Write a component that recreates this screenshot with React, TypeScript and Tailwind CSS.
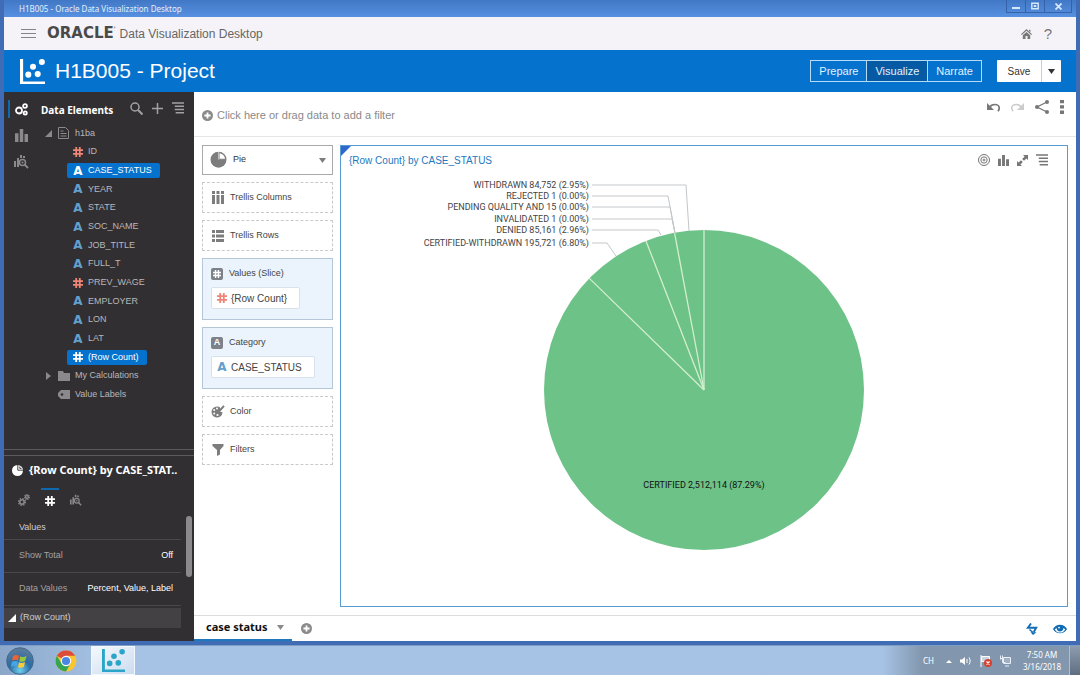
import { useState } from 'react';
import type { ReactNode } from 'react';

type FieldKind = 'number' | 'text';
type Field = { name: string; kind: FieldKind };

const FIELDS: Field[] = [
  { name: 'ID', kind: 'number' },
  { name: 'CASE_STATUS', kind: 'text' },
  { name: 'YEAR', kind: 'text' },
  { name: 'STATE', kind: 'text' },
  { name: 'SOC_NAME', kind: 'text' },
  { name: 'JOB_TITLE', kind: 'text' },
  { name: 'FULL_T', kind: 'text' },
  { name: 'PREV_WAGE', kind: 'number' },
  { name: 'EMPLOYER', kind: 'text' },
  { name: 'LON', kind: 'text' },
  { name: 'LAT', kind: 'text' },
  { name: '(Row Count)', kind: 'number' },
];

// Pie geometry, in viewBox units. Callout points run from the label to the slice.
const CX = 363;
const CY = 216;
const R = 160;
const BOUNDARIES = [0, 2.95, 5.91, 12.71];
const CALLOUTS = [
  { label: 'WITHDRAWN 84,752 (2.95%)', y: 11, line: '345,11 348,57' },
  { label: 'REJECTED 1 (0.00%)', y: 22, line: '327,22 334,59' },
  { label: 'PENDING QUALITY AND 15 (0.00%)', y: 33, line: '329,33 334,59' },
  { label: 'INVALIDATED 1 (0.00%)', y: 45, line: '331,45 334,59' },
  { label: 'DENIED 85,161 (2.96%)', y: 56, line: '317,56 320,61' },
  { label: 'CERTIFIED-WITHDRAWN 195,721 (6.80%)', y: 69, line: '266,69 275,82' },
];

// --- Icons ------------------------------------------------------------------
function Hash({ className = '', size = 10 }: { className?: string; size?: number }) {
  return (
    <svg width={size} height={size} viewBox="0 0 10 10" className={className} fill="none"
         stroke="currentColor" strokeWidth="1.8" aria-hidden="true">
      <path d="M3.2 0v10M6.8 0v10M0 3.2h10M0 6.8h10" />
    </svg>
  );
}

function KindIcon({ kind, selected }: { kind: FieldKind; selected?: boolean }) {
  if (kind === 'number') return <Hash className={selected ? 'text-white' : 'text-[#ee8577]'} />;
  return (
    <span aria-hidden="true"
          className={"w-[10px] text-center font-['DejaVu_Sans',sans-serif] text-[12px] leading-none font-bold " +
            (selected ? 'text-white' : 'text-[#63a0cc]')}>
      A
    </span>
  );
}

function Scatter({ size, className }: { size: number; className: string }) {
  return (
    <svg width={size} height={size} viewBox="0 0 24 24" className={className} fill="currentColor" aria-hidden="true">
      <path d="M0 0h3v21.5h21V24H0z" />
      <circle cx="8" cy="15" r="2.9" />
      <circle cx="12.5" cy="7.5" r="2.9" />
      <circle cx="17" cy="14.5" r="2.9" />
      <circle cx="21" cy="2.9" r="2.9" />
    </svg>
  );
}

function Bars({ size = 13 }: { size?: number }) {
  return (
    <svg width={size} height={size} viewBox="0 0 12 12" fill="currentColor" aria-hidden="true">
      <path d="M0 4h3.2v8H0zM4.4 0h3.2v12H4.4zM8.8 4.500h3.2V12H8.8z" />
    </svg>
  );
}

function BarsSearch({ size = 15 }: { size?: number }) {
  return (
    <svg width={size} height={size} viewBox="0 0 15 15" fill="currentColor" aria-hidden="true">
      <path d="M0 7h2v6H0zM3 4h2v9H3zM6 1h2v3H6zM9 2h2v2H9z" />
      <circle cx="8.5" cy="8.5" r="3" fill="none" stroke="currentColor" strokeWidth="1.5" />
      <circle cx="8.5" cy="8.5" r="1" />
      <path d="M10.5 10.5l3.5 3.5" stroke="currentColor" strokeWidth="1.8" />
    </svg>
  );
}

function Menu({ size = 13 }: { size?: number }) {
  return (
    <svg width={size} height={size} viewBox="0 0 13 13" stroke="currentColor" strokeWidth="1.6" aria-hidden="true">
      <path d="M0 1.2h13M3 4.7h10M3 8.2h10M4 11.7h9" />
    </svg>
  );
}

function CirclePlus() {
  return (
    <svg width="11" height="11" viewBox="0 0 11 11" aria-hidden="true">
      <circle cx="5.5" cy="5.5" r="5.5" fill="#8a8a8a" />
      <path d="M5.5 2.4v6.2M2.4 5.5h6.2" stroke="#fff" strokeWidth="1.8" />
    </svg>
  );
}

function PieIcon({ size, className }: { size: number; className: string }) {
  return (
    <svg width={size} height={size} viewBox="0 0 16 16" className={className} aria-hidden="true">
      <circle cx="8" cy="8.200" r="7.500" fill="currentColor" />
      <path d="M8.500 7.700V1.500a6.200 6.200 0 0 1 6.200 6.200z" fill="#fff" stroke="currentColor" strokeWidth="1" />
      <path d="M8.200 8V.5" stroke="#fff" strokeWidth=".6" />
    </svg>
  );
}

function DataCircles() {
  return (
    <svg width="13" height="13" viewBox="0 0 13 13" fill="none" stroke="currentColor" strokeWidth="1.8" aria-hidden="true">
      <circle cx="4" cy="7.5" r="3" />
      <circle cx="10" cy="3" r="1.9" />
      <circle cx="10.2" cy="10" r="1.6" />
    </svg>
  );
}

function Gears() {
  return (
    <svg width="12" height="12" viewBox="0 0 12 12" fill="none" stroke="currentColor" aria-hidden="true">
      <circle cx="4" cy="8" r="2.200" strokeWidth="1.600" />
      <circle cx="4" cy="8" r="3.500" strokeWidth="1.200" strokeDasharray="1.400 1.350" />
      <circle cx="9" cy="3" r="1.400" strokeWidth="1.300" />
      <circle cx="9" cy="3" r="2.400" strokeWidth="1.100" strokeDasharray="1.200 .700" />
    </svg>
  );
}

function Caret({ className }: { className: string }) {
  return (
    <svg width="7" height="5" viewBox="0 0 7 5" className={className} aria-hidden="true">
      <path d="M0 0h7L3.5 5z" fill="currentColor" />
    </svg>
  );
}

function IconButton({ label, className = '', children }: { label: string; className?: string; children: ReactNode }) {
  return (
    <button type="button" aria-label={label} className={'flex items-center justify-center ' + className}>
      {children}
    </button>
  );
}

// --- Window chrome ----------------------------------------------------------
function TitleBar() {
  return (
    <div className="flex h-[17px] shrink-0 items-center justify-between bg-linear-to-b from-[#4178c6] to-[#5790e0]
                    pl-[15px] pr-1 font-['Noto_Sans',sans-serif] text-[8px] text-[#e4effb]">
      <span>H1B005 - Oracle Data Visualization Desktop</span>
      <div className="flex h-[13px] self-start border-x border-b border-[#3562a8]">
        <IconButton label="Minimize" className="w-[19px] border-r border-[#3562a8]">
          <svg width="8" height="8" viewBox="0 0 8 8"><path d="M0 5h8v2H0z" fill="#d6e8fb" /></svg>
        </IconButton>
        <IconButton label="Maximize" className="w-[19px] border-r border-[#3562a8]">
          <svg width="8" height="8" viewBox="0 0 8 8" fill="none" stroke="#d6e8fb">
            <path d="M.8 1.2h6.4v5.6H.8z" strokeWidth="1.4" /><path d="M3 3.5h2v1H3z" />
          </svg>
        </IconButton>
        <IconButton label="Close" className="w-[26px]">
          <svg width="7" height="7" viewBox="0 0 7 7" stroke="#d6e8fb" strokeWidth="1.7">
            <path d="M.5.5l6 6M6.5.5l-6 6" />
          </svg>
        </IconButton>
      </div>
    </div>
  );
}

function AppHeader() {
  return (
    <header className="flex h-[33px] shrink-0 items-center bg-[#f5f3f7] pl-[17px] pr-6 text-[#666]">
      <IconButton label="Menu">
        <svg width="15" height="11" viewBox="0 0 15 11" stroke="#858585" strokeWidth="1.2">
          <path d="M0 1.5h15M0 5.5h15M0 9.5h15" />
        </svg>
      </IconButton>
      <span className="ml-[11px] font-['DejaVu_Sans',sans-serif] text-[15px] leading-none font-bold text-[#4a4a4a]">
        ORACLE<span className="align-top text-[6px]">'</span>
      </span>
      <span className="ml-1 text-[12px]">Data Visualization Desktop</span>
      <div className="ml-auto flex items-center gap-3 text-[#777]">
        <IconButton label="Home">
          <svg width="11" height="10" viewBox="0 0 11 10" fill="currentColor">
            <path d="M5.5 0L11 5.2l-.8.8L5.5 1.8.8 6 0 5.2z" /><path d="M8 .8h1.4v2.5L8 2z" />
            <path d="M1.8 6.2L5.5 3l3.7 3.2V10H6.5V7h-2v3H1.8z" />
          </svg>
        </IconButton>
        <IconButton label="Help" className="text-[15px] leading-none">?</IconButton>
      </div>
    </header>
  );
}

const MODES = ['Prepare', 'Visualize', 'Narrate'];

function ProjectBar() {
  const [mode, setMode] = useState('Visualize');
  return (
    <div className="flex h-[42px] shrink-0 items-center bg-[#0572ce] pl-4 pr-[15px] text-white">
      <Scatter size={25} className="text-white" />
      <h1 className="ml-[10px] text-[21px]">H1B005 - Project</h1>
      <div className="ml-auto flex h-[22px] divide-x divide-[#b5dcf7] border border-[#b5dcf7] text-[11px]">
        {MODES.map(m => (
          <button key={m} type="button" onClick={() => setMode(m)}
                  className={'px-2 text-[#e2f1fc] ' + (m === mode ? 'bg-[#0659a3]' : '')}>
            {m}
          </button>
        ))}
      </div>
      <div className="ml-[15px] flex h-[22px] divide-x divide-[#ccc] rounded-[1px] bg-white text-[10px] text-[#333]">
        <button type="button" className="w-[45px]">Save</button>
        <IconButton label="Save options" className="w-[19px]"><Caret className="text-[#333]" /></IconButton>
      </div>
    </div>
  );
}

// --- Sidebar ----------------------------------------------------------------
function FieldTree() {
  return (
    <ul className="grid h-[280px] auto-rows-fr text-[9px] text-[#b9b7b9]">
      <li className="flex items-center pl-[7px]">
        <svg width="7" height="7" viewBox="0 0 7 7"><path d="M7 0v7H0z" fill="#8b898b" /></svg>
        <svg width="11" height="12" viewBox="0 0 11 12" fill="none" stroke="#8b898b" className="mx-[6px]">
          <path d="M.5.5h7l3 3v8H.5z M2.5 4h3M2.5 6.5h6M2.5 9h6" />
        </svg>
        h1ba
      </li>
      {FIELDS.map(f => {
        const selected = f.name === 'CASE_STATUS' || f.name === '(Row Count)';
        return (
          <li key={f.name} className="flex items-center pl-[29px]">
            <button type="button"
                    className={'flex h-[15px] items-center gap-[5px] rounded-xs pl-[6px] pr-2 ' +
                      (selected ? 'bg-[#0572ce] text-white' : '')}>
              <KindIcon kind={f.kind} selected={selected} />
              {f.name}
            </button>
          </li>
        );
      })}
      <li className="flex items-center pl-2">
        <svg width="5" height="8" viewBox="0 0 5 8"><path d="M0 0l5 4-5 4z" fill="#8b898b" /></svg>
        <svg width="12" height="10" viewBox="0 0 12 10" className="mr-[5px] ml-[7px]">
          <path d="M0 0h5l1 2h6v8H0z" fill="#8b898b" />
        </svg>
        My Calculations
      </li>
      <li className="flex items-center pl-5">
        <svg width="12" height="9" viewBox="0 0 12 9" className="mr-[5px]">
          <path d="M3 0h9v9H3L0 6V3z" fill="#8b898b" /><circle cx="4" cy="4.5" r="1.3" fill="#322f32" />
        </svg>
        Value Labels
      </li>
    </ul>
  );
}

function PropertiesPane() {
  return (
    <section className="border-t border-[#5c5a5c] pt-[5px]">
      <div className="flex h-[186px] flex-col border-t border-[#5c5a5c] text-[9px] text-[#cfcdcf]">
        <div className="flex h-7 shrink-0 items-center gap-[6px] pl-2">
          <svg width="11" height="11" viewBox="0 0 11 11" aria-hidden="true">
            <circle cx="5.500" cy="5.500" r="5.500" fill="#fff" />
            <path d="M5.800 0v5.200H11M7.800 1.500v1.900h1.800" fill="none" stroke="#322f32" strokeWidth=".9" />
          </svg>
          <h2 className="font-['Noto_Sans',sans-serif] text-[11px] font-bold whitespace-nowrap text-white">
            {'{Row Count} by CASE_STAT..'}
          </h2>
        </div>
        <div className="mt-1 flex h-6 shrink-0 gap-2 pl-[11px] text-[#8b898b]">
          <IconButton label="General" className="w-[18px]"><Gears /></IconButton>
          <IconButton label="Values" className="w-[18px] border-t-2 border-[#0f69ad] text-white"><Hash /></IconButton>
          <IconButton label="Analytics" className="w-[18px]"><BarsSearch size={12} /></IconButton>
        </div>
        <div className="mt-1 flex flex-1 items-start justify-between pr-[2px]">
          <div className="w-[177px]">
            <h3 className="flex h-6 items-center border-b border-[#4a484a] pl-[15px]">Values</h3>
            <dl>
              <div className="flex h-[33px] items-center justify-between border-b border-[#4a484a] pr-2 pl-[15px]">
                <dt className="text-[#a3a1a3]">Show Total</dt>
                <dd className="text-white">Off</dd>
              </div>
              <div className="flex h-[33px] items-center justify-between border-b border-[#4a484a] pr-2 pl-[15px]">
                <dt className="text-[#a3a1a3]">Data Values</dt>
                <dd className="text-white">Percent, Value, Label</dd>
              </div>
            </dl>
            <button type="button" className="mt-[2px] flex h-5 w-full items-center gap-1 bg-[#434143] pl-1">
              <svg width="8" height="8" viewBox="0 0 8 8"><path d="M8 0v8H0z" fill="#fff" /></svg>
              (Row Count)
            </button>
          </div>
          <div className="h-[61px] w-[6px] rounded-sm bg-[#8b898b]" />
        </div>
      </div>
    </section>
  );
}

function Sidebar() {
  return (
    <aside className="flex w-[190px] shrink-0 flex-col bg-[#322f32]">
      <div className="flex flex-1">
        <nav className="w-[34px] pt-1 pl-1 text-[#8b898b]">
          <IconButton label="Data elements" className="my-1 h-[18px] w-full border-l-2 border-[#0f69ad] pr-[6px] text-white">
            <DataCircles />
          </IconButton>
          <IconButton label="Visualizations" className="h-[26px] w-full pr-1"><Bars /></IconButton>
          <IconButton label="Analytics" className="h-[26px] w-full pr-1"><BarsSearch /></IconButton>
        </nav>
        <div className="flex-1">
          <div className="flex h-8 items-center pt-1 pr-[10px] pl-[3px] text-[#a3a1a3]">
            <h2 className="font-['Noto_Sans',sans-serif] text-[10px] font-bold text-white">Data Elements</h2>
            <div className="ml-auto flex items-center gap-[9px] pb-1">
              <IconButton label="Search">
                <svg width="13" height="13" viewBox="0 0 13 13" fill="none" stroke="currentColor" strokeWidth="1.5">
                  <circle cx="5" cy="5" r="4" /><path d="M8 8l4.5 4.5" strokeWidth="2" />
                </svg>
              </IconButton>
              <IconButton label="Add">
                <svg width="11" height="11" viewBox="0 0 11 11" stroke="currentColor" strokeWidth="1.5">
                  <path d="M5.5 0v11M0 5.5h11" />
                </svg>
              </IconButton>
              <IconButton label="Options"><Menu size={12} /></IconButton>
            </div>
          </div>
          <FieldTree />
        </div>
      </div>
      <PropertiesPane />
    </aside>
  );
}

// --- Canvas -----------------------------------------------------------------
function FilterBar() {
  return (
    <div className="flex h-[45px] shrink-0 items-center border-b border-[#e6e6e6] pr-3 pl-2 text-[#777]">
      <button type="button" className="flex items-center gap-1 pt-[2px] text-[11px] text-[#8a8a8a]">
        <CirclePlus />
        Click here or drag data to add a filter
      </button>
      <div className="ml-auto flex items-center gap-[11px] pb-[14px]">
        <IconButton label="Undo">
          <svg width="13" height="10" viewBox="0 0 13 10">
            <path d="M0 1v7h7z" fill="currentColor" />
            <path d="M2.500 5.500c2-4 9-4 9.700 0 .2 1.500-.3 2.500-1.200 3.800" fill="none" stroke="currentColor" strokeWidth="1.700" />
          </svg>
        </IconButton>
        <IconButton label="Redo" className="text-[#ccc]">
          <svg width="13" height="10" viewBox="0 0 13 10">
            <path d="M13 1v7H6z" fill="currentColor" />
            <path d="M10.500 5.500c-2-4-9-4-9.700 0-.2 1.500.3 2.500 1.200 3.800" fill="none" stroke="currentColor" strokeWidth="1.500" />
          </svg>
        </IconButton>
        <IconButton label="Share">
          <svg width="14" height="14" viewBox="0 0 14 14" fill="currentColor">
            <path d="M12 2L2 7l10 5" fill="none" stroke="currentColor" strokeWidth="1.3" />
            <circle cx="12" cy="2" r="2" /><circle cx="2" cy="7" r="2" /><circle cx="12" cy="12" r="2" />
          </svg>
        </IconButton>
        <IconButton label="More">
          <svg width="4" height="14" viewBox="0 0 4 14" fill="currentColor">
            <path d="M0 0h4v3.300H0zM0 5.300h4v3.300H0zM0 10.600h4v3.300H0z" />
          </svg>
        </IconButton>
      </div>
    </div>
  );
}

function DropZone({ label, icon }: { label: string; icon: ReactNode }) {
  return (
    <div className="flex h-[31px] items-center gap-[5px] border border-dashed border-[#c9c9c9] pl-2 text-[#7d7d7d]">
      {icon}
      <span className="text-[#444]">{label}</span>
    </div>
  );
}

function FilledZone({ label, icon, chip, kind }: { label: string; icon: ReactNode; chip: string; kind: FieldKind }) {
  return (
    <div className="flex h-[62px] flex-col items-start gap-[7px] border border-[#b4c6d8] bg-[#ebf3fc] px-2 pt-2">
      <div className="flex h-[13px] items-center gap-[6px] text-[#444]">
        {icon}
        {label}
      </div>
      <button type="button"
              className="flex h-[22px] items-center gap-1 rounded-xs border border-[#d8e2ec] bg-white
                         pr-3 pl-[5px] text-[10px] text-[#444]">
        <KindIcon kind={kind} />
        {chip}
      </button>
    </div>
  );
}

function GrammarPanel() {
  return (
    <div className="flex w-[131px] shrink-0 flex-col gap-[7px] text-[9px]">
      <div className="relative h-[30px] text-[#7d7d7d]">
        <select aria-label="Visualization type" defaultValue="Pie"
                className="h-full w-full appearance-none border border-[#aaa] bg-white pl-[30px] text-[#333]">
          <option>Pie</option>
        </select>
        <PieIcon size={17} className="pointer-events-none absolute top-[6px] left-2" />
        <Caret className="pointer-events-none absolute top-[13px] right-[7px]" />
      </div>
      <DropZone label="Trellis Columns" icon={
        <svg width="14" height="13" viewBox="0 0 14 13" fill="currentColor">
          <path d="M1 0h3v3H1zM5.500 0h3v3h-3zM10 0h3v3h-3zM1 4h3v9H1zM5.500 4h3v9h-3zM10 4h3v9h-3z" />
        </svg>
      } />
      <DropZone label="Trellis Rows" icon={
        <svg width="14" height="12" viewBox="0 0 14 12" fill="currentColor">
          <path d="M1 0h3v3H1zM5 0h8v3H5zM1 4.500h3v3H1zM5 4.500h8v3H5zM1 9h3v3H1zM5 9h8v3H5z" />
        </svg>
      } />
      <FilledZone label="Values (Slice)" chip="{Row Count}" kind="number" icon={
        <span className="flex size-3 items-center justify-center rounded-xs bg-[#7d828a] text-white">
          <Hash size={8} />
        </span>
      } />
      <FilledZone label="Category" chip="CASE_STATUS" kind="text" icon={
        <span aria-hidden="true"
              className="flex size-3 items-center justify-center rounded-xs bg-[#7d828a] font-bold text-white">
          A
        </span>
      } />
      <DropZone label="Color" icon={
        <svg width="14" height="13" viewBox="0 0 14 13">
          <path d="M6 1.500a5.500 5.500 0 1 0 5.500 6c0-1-2 0-2.500-1s1-2.500 0-4C8.300 1.800 7 1.500 6 1.500z" fill="currentColor" />
          <path d="M13 .8L7.500 7" stroke="currentColor" strokeWidth="2" />
          <g fill="#fff"><circle cx="3.200" cy="5" r="1" /><circle cx="6" cy="3.500" r="1" />
            <circle cx="3.200" cy="8.500" r="1" /><circle cx="6.500" cy="10" r="1.100" /></g>
        </svg>
      } />
      <DropZone label="Filters" icon={
        <svg width="14" height="12" viewBox="0 0 14 12"><path d="M1.500 0h11v2L9 6v4.500L6 12V6L1.500 2z" fill="currentColor" /></svg>
      } />
    </div>
  );
}

function PieChart() {
  return (
    <svg viewBox="0 0 726 432" className="min-h-0 w-full flex-1" role="img" aria-label="Row count by case status">
      <circle cx={CX} cy={CY} r={R} fill="#6dc287" />
      <g stroke="#d3efcf" strokeWidth="1.300">
        {BOUNDARIES.map(pct => {
          const a = (pct / 100) * 2 * Math.PI;
          return <line key={pct} x1={CX} y1={CY} x2={CX - R * Math.sin(a)} y2={CY - R * Math.cos(a)} />;
        })}
      </g>
      <g className="font-[Roboto,sans-serif] text-[9px]" fill="#444">
        {CALLOUTS.map(c => (
          <g key={c.label}>
            <polyline points={`251,${c.y} ${c.line}`} fill="none" stroke="#c3c7ca" />
            <text x="248" y={c.y + 3} textAnchor="end">{c.label}</text>
          </g>
        ))}
        <text x={CX} y="314" textAnchor="middle" fill="#111">CERTIFIED 2,512,114 (87.29%)</text>
      </g>
    </svg>
  );
}

function ChartPanel() {
  return (
    <section className="relative flex flex-1 flex-col border border-[#559bd2]">
      <svg width="10" height="10" viewBox="0 0 10 10" className="absolute top-0 left-0">
        <path d="M0 0h10L0 10z" fill="#2e68cc" />
      </svg>
      <div className="flex h-7 shrink-0 items-center justify-between pr-[19px] pl-2">
        <h2 className="text-[10px] text-[#2379bf]">{'{Row Count} by CASE_STATUS'}</h2>
        <div className="flex items-center gap-2 text-[#777]">
          <IconButton label="Focus">
            <svg width="12" height="12" viewBox="0 0 12 12" fill="none" stroke="currentColor">
              <circle cx="6" cy="6" r="5.500" /><circle cx="6" cy="6" r="3.200" /><circle cx="6" cy="6" r="1" />
            </svg>
          </IconButton>
          <IconButton label="Change type"><Bars size={11} /></IconButton>
          <IconButton label="Expand">
            <svg width="11" height="11" viewBox="0 0 11 11" fill="currentColor">
              <path d="M6 0h5v5L9.400 3.400 7 5.800 5.200 4l2.400-2.400zM0 11V6l1.600 1.600L4 5.200 5.800 7 3.400 9.400 5 11z" />
            </svg>
          </IconButton>
          <IconButton label="Options"><Menu size={12} /></IconButton>
        </div>
      </div>
      <PieChart />
    </section>
  );
}

function CanvasTabs() {
  return (
    <div className="mt-2 flex h-[26px] shrink-0 items-stretch border-t border-[#dcdcdc] pr-[9px]">
      <div className="flex w-[98px] items-center gap-[9px] border-b-2 border-[#1f78bd] pl-3">
        <button type="button" className="font-['Noto_Sans',sans-serif] text-[11px] font-bold whitespace-nowrap text-[#111]">
          case status
        </button>
        <IconButton label="Canvas menu"><Caret className="text-[#8a8a8a]" /></IconButton>
      </div>
      <IconButton label="Add canvas" className="ml-[9px]"><CirclePlus /></IconButton>
      <div className="ml-auto flex gap-[15px] text-[#0f6cb6]">
        <IconButton label="Auto apply">
          <svg width="12" height="12" viewBox="0 0 12 12" fill="none" stroke="currentColor" strokeWidth="1.900">
            <path d="M5 .5L1.800 4.800H10.200L7.800 9" />
            <path d="M3.500 6.500L7 9.500" strokeWidth="1.500" />
            <path d="M4.500 9.300h6L7 12z" fill="currentColor" stroke="none" />
          </svg>
        </IconButton>
        <IconButton label="Preview">
          <svg width="14" height="10" viewBox="0 0 14 10">
            <path d="M0 5C3-.8 11-.8 14 5 11 10.800 3 10.800 0 5z" fill="currentColor" />
            <path d="M1.800 5.300C2.400 6.900 3.700 8 5.400 8.500h3.200c1.700-.5 3-1.600 3.600-3.200L10.400 4c0 2-1.400 3.500-3.400 3.500S3.600 6 3.600 4z" fill="#fff" />
            <circle cx="6" cy="3.600" r=".9" fill="#fff" />
          </svg>
        </IconButton>
      </div>
    </div>
  );
}

// --- Desktop taskbar --------------------------------------------------------
function Taskbar() {
  return (
    <footer className="flex h-[30px] shrink-0 items-center border-t border-[#7f9cc2] bg-linear-to-r from-[#8aa6c8]
                       from-0% via-[#a6c2e4] via-10% to-[#a6c2e4] font-['Noto_Sans',sans-serif] text-[8px] text-white">
      <IconButton label="Start" className="ml-[6px]">
        <svg width="28" height="28" viewBox="0 0 28 28">
          <defs>
            <radialGradient id="orb" cx="50%" cy="85%" r="80%">
              <stop offset="0" stopColor="#6fd0ee" /><stop offset=".5" stopColor="#2b6ca4" />
              <stop offset="1" stopColor="#5d7c9b" />
            </radialGradient>
          </defs>
          <circle cx="14" cy="14" r="13.300" fill="url(#orb)" stroke="#3b5f86" strokeWidth=".8" />
          <path d="M7 9c2-1.300 4-1.300 6-.2l-1 4.700c-2-1-4-1-6 .2z" fill="#ec6434" />
          <path d="M14.200 9.200c2 1.200 4 1.200 6.300-.2l-1.200 4.800c-2 1.300-4 1.300-6 .1z" fill="#9ac73c" />
          <path d="M5.800 15c2-1.200 4-1.200 6-.2l-1 4.700c-2-1-4-.8-6 .3z" fill="#46a5e4" />
          <path d="M13 15.200c2 1.200 4 1.200 6-.1L18 19.800c-2 1.300-4 1.200-6 .1z" fill="#f8cb3c" />
        </svg>
      </IconButton>
      <IconButton label="Chrome" className="ml-[21px]">
        <svg width="22" height="22" viewBox="0 0 22 22">
          <circle cx="11" cy="11" r="10.500" fill="#fbc531" />
          <path d="M11 11L1.900 5.800A10.500 10.500 0 0 1 20.100 5.800H11z" fill="#dd4b3a" />
          <path d="M1.900 5.800A10.500 10.500 0 0 0 11 21.500L15.500 13.600 11 11l-4.500 2.600z" fill="#36a553" />
          <circle cx="11" cy="11" r="5.200" fill="#fff" /><circle cx="11" cy="11" r="4.100" fill="#4b86e4" />
        </svg>
      </IconButton>
      <IconButton label="Data Visualization Desktop"
                  className="ml-[14px] h-full w-11 border border-[#f3f8fd] bg-linear-to-br from-[#f4f8fc] to-[#cbdcef]">
        <Scatter size={23} className="text-[#2aa5c8]" />
      </IconButton>
      <div className="ml-auto flex h-full items-center bg-linear-to-r from-[#a6c2e4] to-[#8297ae] to-20% pl-10">
        <span>CH</span>
        <div className="ml-3 flex items-center gap-2">
          <svg width="6" height="4" viewBox="0 0 6 4"><path d="M0 4l3-3 3 3z" fill="#fff" /></svg>
          <svg width="12" height="10" viewBox="0 0 12 10">
            <path d="M0 3.500h2L5 1v8L2 6.500H0z" fill="#fff" />
            <path d="M7 3v4M9 1.500c1.500 2 1.500 5 0 7" fill="none" stroke="#fff" />
          </svg>
          <svg width="12" height="12" viewBox="0 0 12 12">
            <path d="M1 0v12M1.500 1.500h8v5h-8z" stroke="#fff" fill="#c9d4e0" />
            <circle cx="8" cy="8" r="4" fill="#d6402f" />
            <path d="M6.500 6.500l3 3M9.500 6.500l-3 3" stroke="#fff" strokeWidth="1.200" />
          </svg>
          <svg width="11" height="12" viewBox="0 0 11 12" fill="none" stroke="#e8eef5">
            <path d="M3.500 2.500h7v6h-7zM5 11h4M.5.5v4M2.500.5v4M.5 3.500h2v4h3" fill="#9fb0c2" />
          </svg>
        </div>
        <time className="ml-3 text-center leading-3">7:50 AM<br />3/16/2018</time>
        <button type="button" aria-label="Show desktop"
                className="ml-2 h-full w-[11px] border-l border-[#aebccb] bg-linear-to-b from-[#8d9cae] to-[#5f6f82]" />
      </div>
    </footer>
  );
}

export default function App() {
  return (
    <div className="flex h-screen flex-col overflow-hidden bg-[#3b68b0] font-['Liberation_Sans',Arial,sans-serif]">
      <div className="flex min-h-0 flex-1 flex-col border-x-4 border-b-4 border-[#3f6cb4]">
        <TitleBar />
        <AppHeader />
        <ProjectBar />
        <div className="flex min-h-0 flex-1">
          <Sidebar />
          <main className="flex min-w-0 flex-1 flex-col bg-white">
            <FilterBar />
            <div className="flex min-h-0 flex-1 gap-[7px] pt-2 pr-2 pl-2">
              <GrammarPanel />
              <ChartPanel />
            </div>
            <CanvasTabs />
          </main>
        </div>
      </div>
      <Taskbar />
    </div>
  );
}
